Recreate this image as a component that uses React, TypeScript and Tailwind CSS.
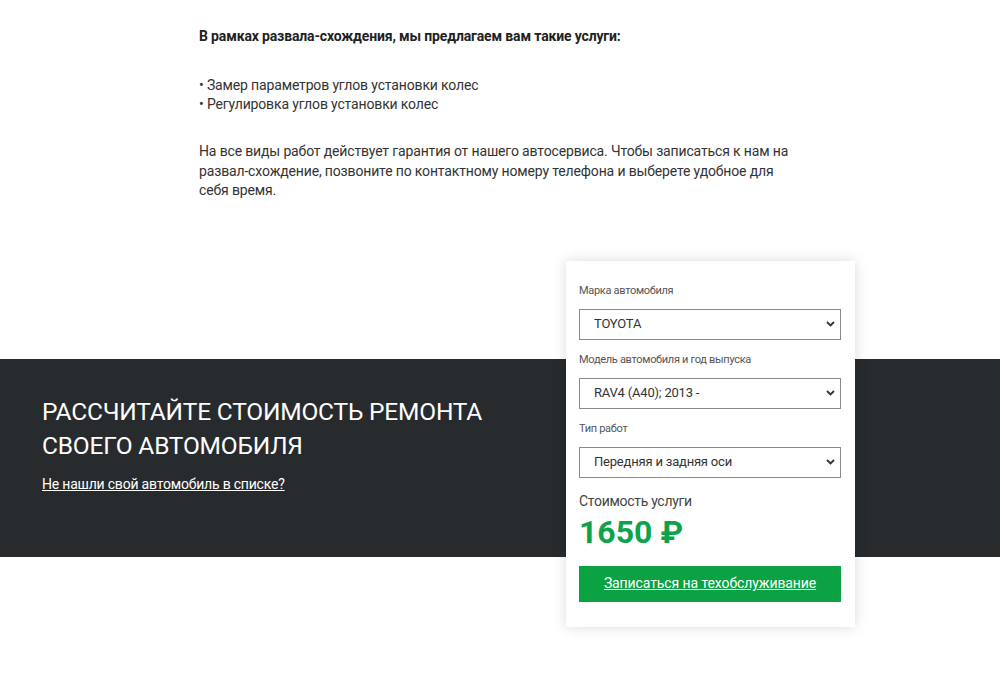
import React, { useState } from "react";

const font = { fontFamily: "Roboto, 'Noto Sans', sans-serif" };

const services = [
	"Замер параметров углов установки колес",
	"Регулировка углов установки колес",
];

interface SelectFieldProps {
	label: string;
	value: string;
	options: string[];
	onChange: (v: string) => void;
	first?: boolean;
}

const SelectField = ({ label, value, options, onChange, first }: SelectFieldProps) => {
	return (
		<div className={first ? "" : "mt-3"}>
			<label className="block text-[11px] leading-[15px] tracking-[-0.3px] text-[#555] mb-[11px]">
				{label}
			</label>
			<div className="relative">
				<select
					value={value}
					onChange={(e) => onChange(e.target.value)}
					className="appearance-none block w-full h-[31px] border border-[#8a8a8a] bg-white pl-[14px] pr-8 text-[13px] tracking-[-0.2px] text-[#333] outline-none"
				>
					{options.map((o) => (
						<option key={o}>{o}</option>
					))}
				</select>
				<svg
					className="pointer-events-none absolute right-[6px] top-[12px]"
					width="9"
					height="6"
					viewBox="0 0 9 6"
					fill="none"
				>
					<path d="M1 1l3.5 3.5L8 1" stroke="#333" strokeWidth="1.8" />
				</svg>
			</div>
		</div>
	);
};

const App = () => {
	const [brand, setBrand] = useState("TOYOTA");
	const [model, setModel] = useState("RAV4 (A40); 2013 -");
	const [work, setWork] = useState("Передняя и задняя оси");

	return (
		<div className="bg-white min-h-[675px] text-[#333]" style={font}>
			<div className="w-[600px] ml-[199px] pt-[27px] text-[14px] leading-[19px] tracking-[-0.15px]">
				<p className="font-bold text-[#222]">
					В рамках развала-схождения, мы предлагаем вам такие услуги:
				</p>
				<ul className="mt-[30px]">
					{services.map((s) => (
						<li key={s}>• {s}</li>
					))}
				</ul>
				<p className="mt-[28px] leading-[19.5px]">
					На все виды работ действует гарантия от нашего автосервиса. Чтобы
					записаться к нам на развал-схождение, позвоните по контактному номеру
					телефона и выберете удобное для себя время.
				</p>
			</div>

			<div className="relative mt-[158px]">
				<div className="h-[198px] bg-[#282b2e] pl-[42px] pt-[36px]">
					<h2 className="text-white text-[24.5px] leading-[34px] tracking-[-0.2px] uppercase">
						Рассчитайте стоимость ремонта
						<br />
						своего автомобиля
					</h2>
					<a
						href="#"
						className="inline-block mt-[11px] text-[14px] tracking-[-0.2px] text-white underline"
					>
						Не нашли свой автомобиль в списке?
					</a>
				</div>

				<div className="absolute left-[566px] top-[-98px] w-[289px] bg-white pl-[13px] pr-[14px] pt-[22px] pb-[25px] shadow-[0_0_12px_rgba(0,0,0,0.15)]">
					<SelectField
						first
						label="Марка автомобиля"
						value={brand}
						options={["TOYOTA", "NISSAN", "MAZDA"]}
						onChange={setBrand}
					/>
					<SelectField
						label="Модель автомобиля и год выпуска"
						value={model}
						options={["RAV4 (A40); 2013 -", "Camry (XV70); 2017 -"]}
						onChange={setModel}
					/>
					<SelectField
						label="Тип работ"
						value={work}
						options={["Передняя и задняя оси", "Передняя ось"]}
						onChange={setWork}
					/>
					<div className="mt-[13px] text-[14px] leading-[20px] tracking-[-0.3px] text-[#444]">
						Стоимость услуги
					</div>
					<div className="mt-[3px] text-[32px] leading-[36px] font-bold text-[#0ea34a]">
						1650 ₽
					</div>
					<button
						type="button"
						className="mt-[16px] w-full h-[36px] bg-[#0aa243] text-white text-[14px] tracking-[-0.1px] underline"
					>
						Записаться на техобслуживание
					</button>
				</div>
			</div>
		</div>
	);
};

export default App;
